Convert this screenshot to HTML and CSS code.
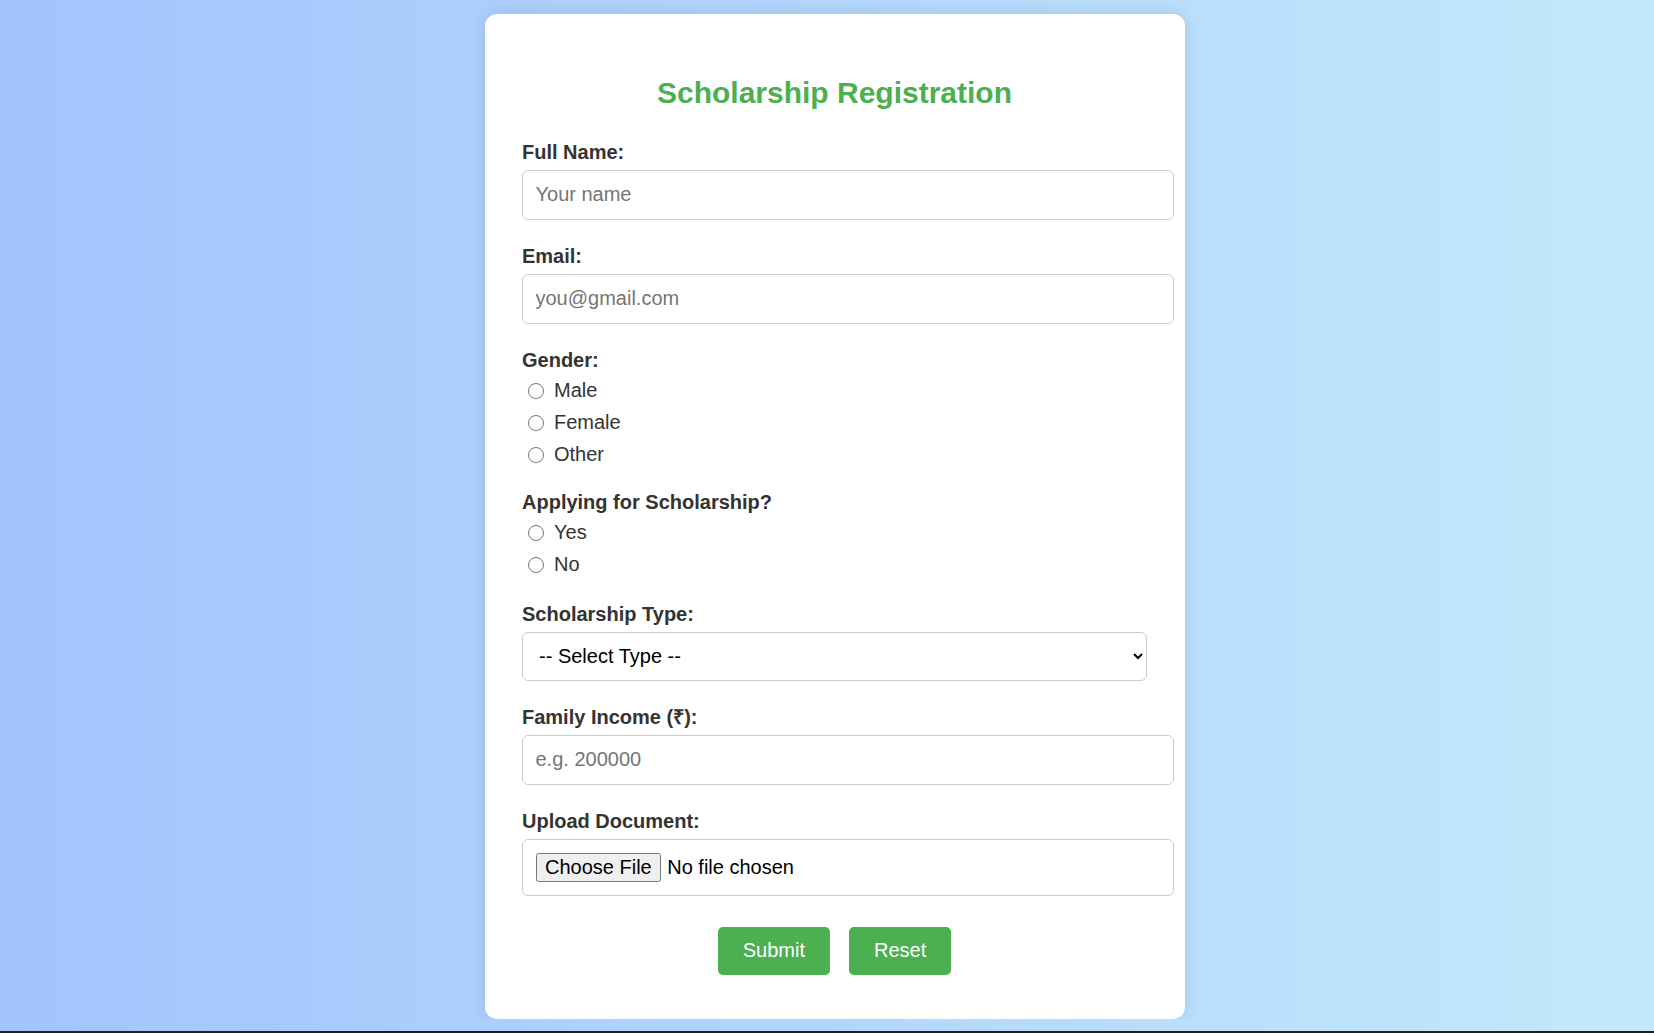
FILE: index.html
```html
<!DOCTYPE html>
<html lang="en">
<head>
<meta charset="UTF-8">
<title>Scholarship Registration</title>
<link rel="stylesheet" href="styles.css">
</head>
<body>
  <form class="card">
    <h2 class="title">Scholarship Registration</h2>

    <div class="group">
      <label class="label" for="name">Full Name:</label>
      <input class="field" id="name" type="text" placeholder="Your name">
    </div>

    <div class="group">
      <label class="label" for="email">Email:</label>
      <input class="field" id="email" type="email" placeholder="you@gmail.com">
    </div>

    <div class="group radios">
      <div class="label">Gender:</div>
      <label class="opt"><input class="radio" type="radio" name="gender"> Male</label>
      <label class="opt"><input class="radio" type="radio" name="gender"> Female</label>
      <label class="opt"><input class="radio" type="radio" name="gender"> Other</label>
    </div>

    <div class="group radios last-radios">
      <div class="label">Applying for Scholarship?</div>
      <label class="opt"><input class="radio" type="radio" name="apply"> Yes</label>
      <label class="opt"><input class="radio" type="radio" name="apply"> No</label>
    </div>

    <div class="group">
      <label class="label" for="type">Scholarship Type:</label>
      <select class="select" id="type">
        <option>-- Select Type --</option>
        <option>Merit Based</option>
        <option>Need Based</option>
        <option>Sports</option>
      </select>
    </div>

    <div class="group">
      <label class="label" for="income">Family Income (₹):</label>
      <input class="field" id="income" type="number" placeholder="e.g. 200000">
    </div>

    <div class="group">
      <label class="label" for="doc">Upload Document:</label>
      <input class="field file" id="doc" type="file">
    </div>

    <div class="actions">
      <button class="btn" type="submit">Submit</button>
      <button class="btn" type="reset">Reset</button>
    </div>
  </form>
</body>
</html>
```

FILE: styles.css
```css
html {
  height: 100%;
  box-sizing: border-box;
  border-bottom: 2px solid #202020;
  background: linear-gradient(to right, #a1c4fd, #c2e9fb);
}

body {
  margin: 0;
  padding: 14px 0 0 16px;
  display: flex;
  justify-content: center;
  align-items: flex-start;
  font-family: "Liberation Sans", Arial, sans-serif;
}

.card {
  width: 700px;
  box-sizing: border-box;
  padding: 37.5px 38px 37.5px 37px;
  background: #fff;
  border-radius: 12px;
  box-shadow: 0 0 15px rgba(0, 0, 0, 0.1);
}

.title {
  margin: 24px 0 31px;
  text-align: center;
  color: #4caf50;
  font-size: 30px;
  line-height: 34px;
  font-weight: bold;
}

.group {
  margin-bottom: 25px;
}

.group.radios {
  margin-bottom: 24px;
}

.group.last-radios {
  margin-bottom: 26px;
}

.label {
  display: block;
  margin-bottom: 6px;
  font-size: 20px;
  line-height: 23px;
  font-weight: bold;
  color: #333;
}

.field {
  display: block;
  width: 100%;
  box-sizing: content-box;
  padding: 12.5px;
  margin: 0;
  border: 1px solid #ccc;
  border-radius: 6px;
  font-family: "Liberation Sans", Arial, sans-serif;
  font-size: 20px;
  line-height: 23px;
  height: 23px;
  color: #000;
  background: #fff;
}

.field::placeholder {
  color: #757575;
}

.file {
  height: auto;
  padding-top: 13px;
  padding-bottom: 13px;
}

.file::file-selector-button {
  font-family: "Liberation Sans", Arial, sans-serif;
  font-size: 20px;
  padding: 1px 7.5px;
  margin-right: 6px;
}

.select {
  display: block;
  width: 100%;
  box-sizing: border-box;
  height: 49px;
  margin-top: 4px;
  padding: 0 12px;
  border: 1px solid #ccc;
  border-radius: 6px;
  font-family: "Liberation Sans", Arial, sans-serif;
  font-size: 20px;
  color: #000;
  background: #fff;
}

.opt {
  display: flex;
  align-items: center;
  height: 25px;
  margin-bottom: 7px;
  font-size: 20px;
  color: #333;
}

.opt:last-child {
  margin-bottom: 0;
}

.radio {
  width: 16px;
  height: 16px;
  margin: 2px 10px 0 6px;
}

.actions {
  display: flex;
  justify-content: center;
  gap: 19px;
  margin-top: 31px;
  margin-bottom: 7px;
}

.btn {
  padding: 0 25px;
  height: 48px;
  border: none;
  border-radius: 5px;
  background: #4caf50;
  color: #fff;
  font-family: "Liberation Sans", Arial, sans-serif;
  font-size: 20px;
  cursor: pointer;
}
```
